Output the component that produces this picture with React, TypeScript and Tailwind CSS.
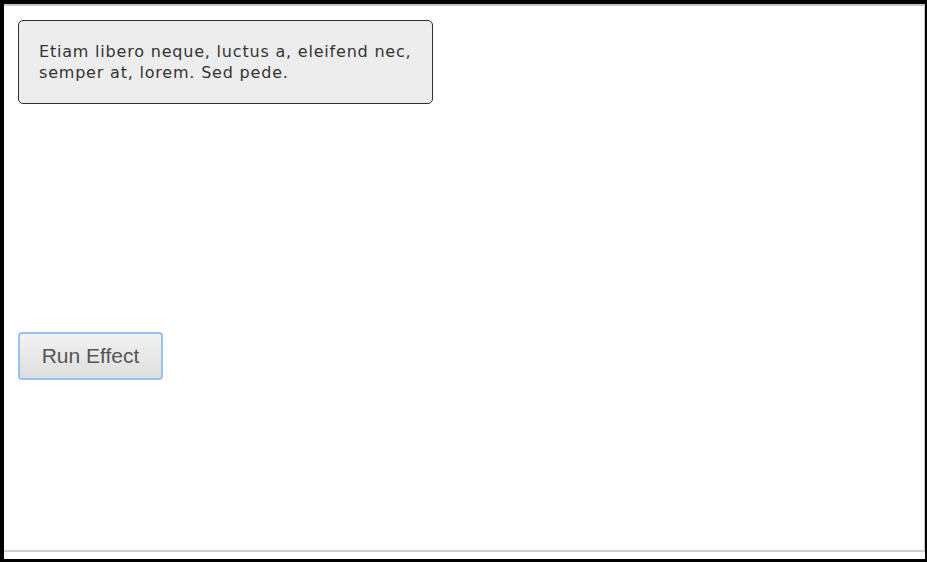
import { useState } from "react";

export default function App() {
  const [shown, setShown] = useState(true);

  return (
    <div className="w-[927px] h-[562px] bg-black pl-[4px] pr-[2px] pt-[4px] pb-[3px] flex">
      <div className="flex-1 flex flex-col bg-white">
        <div className="flex-1 flex flex-col border-t-2 border-r border-[#c8c8c8] px-[14px] pt-[14px]">
          {/* effect target */}
          <div
            className={`w-[415px] h-[84px] rounded-[5px] border border-[#2e2e2e] bg-[#ededed] px-[20px] pt-[20px] text-[#333] text-[16px] tracking-[0.8px] leading-[21px] font-['DejaVu_Sans',sans-serif] ${shown ? "" : "invisible"}`}
          >
            Etiam libero neque, luctus a, eleifend nec, semper at, lorem. Sed pede.
          </div>

          <div className="mt-[228px]">
            <button
              type="button"
              onClick={() => setShown((s) => !s)}
              className="w-[145px] h-[48px] rounded-[4px] border-2 border-[#9cbff5] bg-gradient-to-b from-[#f2f2f2] to-[#dedede] text-[21px] text-[#555] font-['Liberation_Sans',Arial,sans-serif]"
            >
              Run Effect
            </button>
          </div>
        </div>
        <div className="h-[2px] bg-[#cfcfcf]" />
        <div className="h-[7px] bg-white" />
      </div>
    </div>
  );
}
